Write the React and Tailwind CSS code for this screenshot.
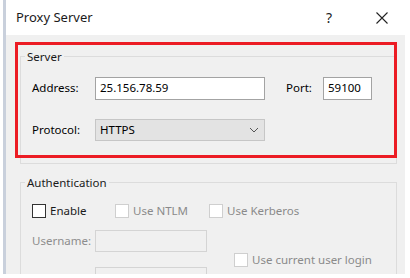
import React from 'react';

const font = { fontFamily: '"Segoe UI", "Noto Sans", sans-serif' };

const Check = ({ disabled, label, className = '' }) => (
  <label className={`flex items-center gap-[4px] ${className}`}>
    <span
      className={`w-[14px] h-[14px] bg-white border ${
        disabled ? 'border-[#cfcfcf]' : 'border-[#333333]'
      }`}
    />
    <span className={disabled ? 'text-[#8a8a8a]' : 'text-[#1a1a1a]'}>{label}</span>
  </label>
);

const Chevron = () => (
  <svg width="10" height="6" viewBox="0 0 10 6" className="text-[#555]">
    <polyline points="1,1 5,5 9,1" fill="none" stroke="currentColor" strokeWidth="1" />
  </svg>
);

export default function App() {
  return (
    <div className="w-[410px] h-[278px] bg-white flex overflow-hidden text-[11.5px] leading-none" style={font}>
      <div className="w-[3px] shrink-0" />
      <div className="w-[3px] h-[274px] shrink-0 bg-[#c9d0dc]" />

      <div className="w-[399px] h-[274px] flex flex-col">
        <div className="h-[35px] shrink-0 bg-white flex items-center pl-[10px] pr-[17px]">
          <span className="text-[13px] text-[#1a1a1a]">Proxy Server</span>
          <span className="ml-auto text-[14px] text-[#222] w-[8px]">?</span>
          <svg width="12" height="12" viewBox="0 0 12 12" className="ml-[42px]">
            <path d="M0.5 0.5 L11.5 11.5 M11.5 0.5 L0.5 11.5" stroke="#222" strokeWidth="1.1" />
          </svg>
        </div>

        <div className="relative flex-1 min-h-0 overflow-hidden bg-[#f0f0f0] pl-[14px] pt-[16px] text-black">
          <fieldset className="w-[377px] h-[113px] border border-[#dcdcdc] px-[11px] pb-0">
            <legend className="ml-[-7px] px-[2px] text-[#1a1a1a]">Server</legend>
            <div className="flex items-center mt-[14px] h-[23px]">
              <span className="w-[63px]">Address:</span>
              <div className="w-[170px] h-[23px] bg-white border border-[#a3a3a3] flex items-center pl-[4px]">
                25.156.78.59
              </div>
              <span className="ml-[21px] w-[37px]">Port:</span>
              <div className="w-[49px] h-[23px] bg-white border border-[#a3a3a3] flex items-center pl-[4px]">
                59100
              </div>
            </div>
            <div className="flex items-center mt-[19px] h-[22px]">
              <span className="w-[63px]">Protocol:</span>
              <div className="w-[170px] h-[22px] bg-[#e3e3e3] border border-[#c6c6c6] flex items-center pl-[4px] pr-[5px]">
                <span>HTTPS</span>
                <span className="ml-auto">
                  <Chevron />
                </span>
              </div>
            </div>
          </fieldset>

          <fieldset className="mt-[13px] w-[377px] h-[120px] border border-[#dcdcdc] px-[11px]">
            <legend className="ml-[-7px] px-[2px] text-[#1a1a1a]">Authentication</legend>
            <div className="flex items-center mt-[15px] h-[14px]">
              <Check label="Enable" className="w-[83px]" />
              <Check disabled label="Use NTLM" className="w-[94px]" />
              <Check disabled label="Use Kerberos" />
            </div>
            <div className="flex mt-[12px]">
              <div className="flex flex-col">
                <div className="flex items-center h-[22px]">
                  <span className="w-[63px] text-[#8d8d8d]">Username:</span>
                  <div className="w-[112px] h-[22px] bg-[#f0f0f0] border border-[#d4d4d4]" />
                </div>
                <div className="flex items-center h-[22px] mt-[15px]">
                  <span className="w-[63px] text-[#8d8d8d]">Password:</span>
                  <div className="w-[112px] h-[22px] bg-[#f0f0f0] border border-[#d4d4d4]" />
                </div>
              </div>
              <Check disabled label="Use current user login" className="ml-[27px] mt-[23px] h-[14px]" />
            </div>
          </fieldset>

          <div className="absolute left-[9px] top-[7px] w-[382px] h-[116px] border-[3px] border-[#ec1c24]" />
        </div>
      </div>
    </div>
  );
}
